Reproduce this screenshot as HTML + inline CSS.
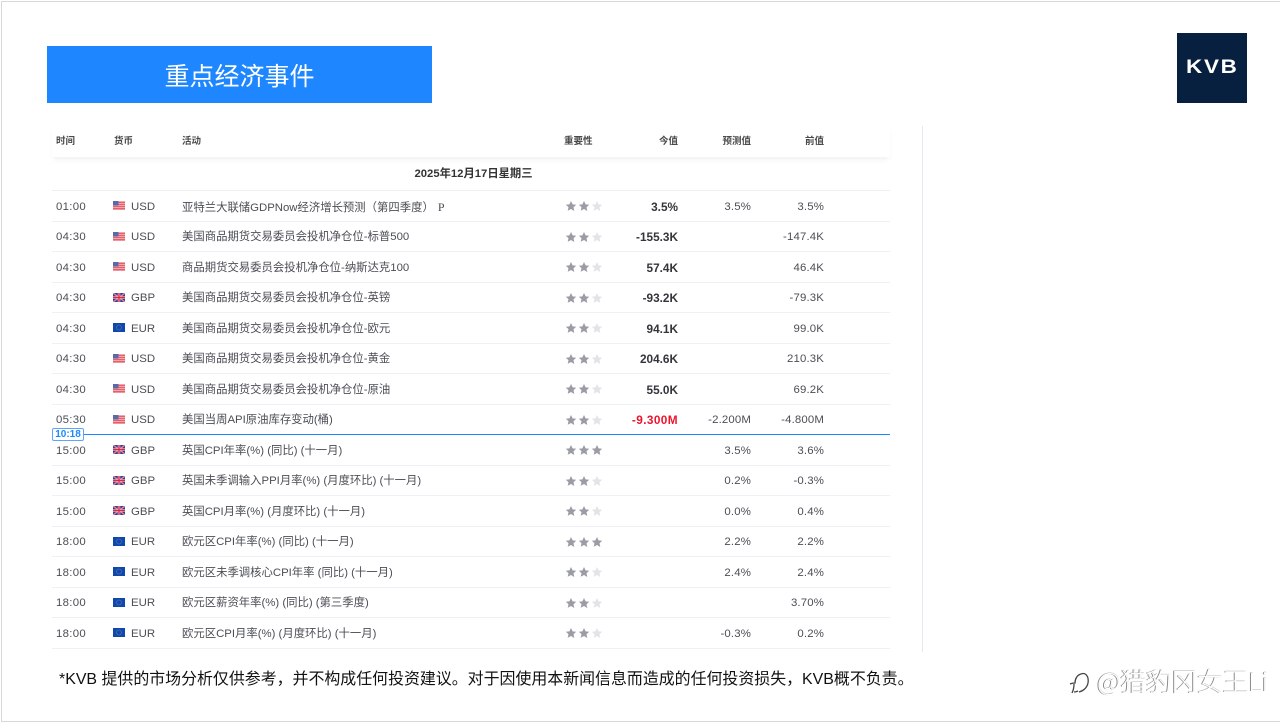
<!DOCTYPE html>
<html lang="zh"><head><meta charset="utf-8"><title>重点经济事件</title>
<style>
html,body{margin:0;padding:0;background:#fff}
body{width:1280px;height:723px;position:relative;overflow:hidden;font-family:"Liberation Sans","Noto Sans CJK SC",sans-serif;color:#3c3f46}
#w{position:absolute;left:0;top:0;width:1280px;height:723px;filter:blur(.35px);background:#fff}
.frame{position:absolute;left:1px;top:1px;width:1279px;height:721px;border:1px solid #d8d8d8;border-right:0;box-sizing:border-box}
.title{position:absolute;left:47px;top:46px;width:385px;height:57px;background:#1e87ff;color:#fff;font-size:25px;line-height:58px;text-align:center;font-family:"Noto Sans CJK SC",sans-serif;font-weight:400}
.logo{position:absolute;left:1177px;top:33px;width:70px;height:70px;background:#07203f;color:#fff;font-size:19px;font-weight:bold;line-height:69px;text-align:center;letter-spacing:1.5px}
.logo span{display:inline-block;transform:scaleX(1.18)}
.vline{position:absolute;left:922px;top:126px;width:1px;height:526px;background:#e4e7ec}
.hd{position:absolute;left:52px;top:126px;width:838px;height:31px;box-shadow:0 4px 6px -2px rgba(0,0,0,.07)}
.hd span{position:absolute;top:7.500px;font-size:9.500px;line-height:16px;font-weight:bold;color:#4a4a4a}
.date{position:absolute;left:52px;width:838px;top:165.500px;text-align:center;font-size:11.300px;line-height:16px;font-weight:bold;color:#333;text-indent:5px}
.r{position:absolute;left:52px;width:838px;height:30px;border-top:1px solid #edf0f5}
.r span{position:absolute;top:7.500px;line-height:16px;font-size:11.400px;white-space:nowrap;color:#4b4e55}
.t{left:4px;letter-spacing:.3px}
.c{left:79px}
.n{left:130px;font-size:11.370px!important}
.a,.f,.p{text-align:right}
.a{right:212px;font-weight:bold;font-size:11.800px!important;color:#33353b!important}
.f{right:139px;letter-spacing:.15px}
.p{right:66px;letter-spacing:.15px}
.s{left:513px;width:38px;height:10px;top:10px!important}
.fl{left:61px;top:10px!important;width:12px;height:9px}
svg{display:block}
.red{color:#f0122d!important;letter-spacing:.4px}
.now{position:absolute;left:52px;top:434px;width:838px;height:1px;background:#1e87ff}
.nowt{position:absolute;left:52px;top:428px;width:32px;height:13px;box-sizing:border-box;border:1px solid #5aa5ff;border-radius:2px;background:#fff;color:#1e87ff;font-size:10px;line-height:11px;text-align:center;font-weight:bold}
.foot{position:absolute;left:59px;top:670px;font-size:15.930px;line-height:20px;color:#111;white-space:nowrap}
.wm{position:absolute;left:1097px;top:666px;font-size:25.600px;line-height:30px;color:#fff;white-space:nowrap;font-family:"Noto Sans CJK SC",sans-serif;font-weight:300;text-shadow:-1px 0 0 #8a8a8a,0 -.5px 0 #bbb}
.wi{position:absolute;left:1067px;top:670px}
</style></head><body>
<svg width="0" height="0" style="position:absolute"><defs>
<symbol id="st" viewBox="0 0 38 10"><path fill="#9a9ca6" d="M6 0l1.600 3.400 3.600.4-2.700 2.500.8 3.700L6 8 2.700 9.800l.8-3.700L.8 3.800l3.600-.4zM19 0l1.600 3.400 3.600.4-2.700 2.500.8 3.700L19 8l-3.300 1.800.8-3.700-2.700-2.300 3.600-.4z"/><path fill="#e3e4e8" d="M32 0l1.600 3.400 3.600.4-2.700 2.500.8 3.700L32 8l-3.300 1.800.8-3.700-2.700-2.300 3.600-.4z"/></symbol>
<symbol id="s3" viewBox="0 0 38 10"><path fill="#9a9ca6" d="M6 0l1.600 3.400 3.600.4-2.700 2.500.8 3.700L6 8 2.700 9.800l.8-3.700L.8 3.800l3.600-.4zM19 0l1.600 3.400 3.600.4-2.700 2.500.8 3.700L19 8l-3.300 1.800.8-3.700-2.700-2.300 3.600-.4zM32 0l1.600 3.400 3.600.4-2.700 2.500.8 3.700L32 8l-3.300 1.800.8-3.700-2.700-2.300 3.600-.4z"/></symbol>
<symbol id="us" viewBox="0 0 12 9"><rect width="12" height="9" fill="#f4a6ac"/><path fill="#e0606c" d="M0 1h12v1H0zM0 3h12v1H0zM0 5h12v1H0zM0 7h12v1.200H0z"/><rect width="5.500" height="4.500" fill="#5a6aa8"/></symbol>
<symbol id="gb" viewBox="0 0 12 9"><rect width="12" height="9" rx="1.500" fill="#2f3f96"/><path stroke="#e88a9a" stroke-width="1.300" d="M0 0l12 9M12 0L0 9"/><path stroke="#f3dfe2" stroke-width="2.400" d="M6 0v9M0 4.500h12"/><path stroke="#dc2848" stroke-width="1.400" d="M6 0v9M0 4.500h12"/></symbol>
<symbol id="eu" viewBox="0 0 12 9"><rect width="12" height="9" fill="#0f47af"/><circle cx="6" cy="4.500" r="2.500" fill="none" stroke="#4a70a8" stroke-width=".8"/></symbol>
</defs></svg>
<div id="w">
<div class="frame"></div>
<div class="title">重点经济事件</div>
<div class="logo"><span>KVB</span></div>
<div class="vline"></div>
<div class="hd"><span style="left:4px">时间</span><span style="left:62px">货币</span><span style="left:130px">活动</span><span style="left:512px">重要性</span><span style="right:212px">今值</span><span style="right:139px">预测值</span><span style="right:66px">前值</span></div>
<div class="date">2025年12月17日星期三</div>

<div class="r" style="top:190px"><span class="t">01:00</span><span class="fl"><svg width="12" height="9"><use href="#us"/></svg></span><span class="c">USD</span><span class="n">亚特兰大联储GDPNow经济增长预测（第四季度）<span style="position:static;margin-left:1px;font-family:'Liberation Serif',serif;font-size:12px">&nbsp;P</span></span><span class="s"><svg width="38" height="10"><use href="#st"/></svg></span><span class="a">3.5%</span><span class="f">3.5%</span><span class="p">3.5%</span></div>
<div class="r" style="top:220.500px"><span class="t">04:30</span><span class="fl"><svg width="12" height="9"><use href="#us"/></svg></span><span class="c">USD</span><span class="n">美国商品期货交易委员会投机净仓位-标普500</span><span class="s"><svg width="38" height="10"><use href="#st"/></svg></span><span class="a">-155.3K</span><span class="p">-147.4K</span></div>
<div class="r" style="top:251px"><span class="t">04:30</span><span class="fl"><svg width="12" height="9"><use href="#us"/></svg></span><span class="c">USD</span><span class="n">商品期货交易委员会投机净仓位-纳斯达克100</span><span class="s"><svg width="38" height="10"><use href="#st"/></svg></span><span class="a">57.4K</span><span class="p">46.4K</span></div>
<div class="r" style="top:281.500px"><span class="t">04:30</span><span class="fl"><svg width="12" height="9"><use href="#gb"/></svg></span><span class="c">GBP</span><span class="n">美国商品期货交易委员会投机净仓位-英镑</span><span class="s"><svg width="38" height="10"><use href="#st"/></svg></span><span class="a">-93.2K</span><span class="p">-79.3K</span></div>
<div class="r" style="top:312px"><span class="t">04:30</span><span class="fl"><svg width="12" height="9"><use href="#eu"/></svg></span><span class="c">EUR</span><span class="n">美国商品期货交易委员会投机净仓位-欧元</span><span class="s"><svg width="38" height="10"><use href="#st"/></svg></span><span class="a">94.1K</span><span class="p">99.0K</span></div>
<div class="r" style="top:342.500px"><span class="t">04:30</span><span class="fl"><svg width="12" height="9"><use href="#us"/></svg></span><span class="c">USD</span><span class="n">美国商品期货交易委员会投机净仓位-黄金</span><span class="s"><svg width="38" height="10"><use href="#st"/></svg></span><span class="a">204.6K</span><span class="p">210.3K</span></div>
<div class="r" style="top:373px"><span class="t">04:30</span><span class="fl"><svg width="12" height="9"><use href="#us"/></svg></span><span class="c">USD</span><span class="n">美国商品期货交易委员会投机净仓位-原油</span><span class="s"><svg width="38" height="10"><use href="#st"/></svg></span><span class="a">55.0K</span><span class="p">69.2K</span></div>
<div class="r" style="top:403.500px"><span class="t">05:30</span><span class="fl"><svg width="12" height="9"><use href="#us"/></svg></span><span class="c">USD</span><span class="n">美国当周API原油库存变动(桶)</span><span class="s"><svg width="38" height="10"><use href="#st"/></svg></span><span class="a red">-9.300M</span><span class="f">-2.200M</span><span class="p">-4.800M</span></div>
<div class="r" style="top:434px"><span class="t">15:00</span><span class="fl"><svg width="12" height="9"><use href="#gb"/></svg></span><span class="c">GBP</span><span class="n">英国CPI年率(%) (同比) (十一月)</span><span class="s"><svg width="38" height="10"><use href="#s3"/></svg></span><span class="f">3.5%</span><span class="p">3.6%</span></div>
<div class="r" style="top:464.500px"><span class="t">15:00</span><span class="fl"><svg width="12" height="9"><use href="#gb"/></svg></span><span class="c">GBP</span><span class="n">英国未季调输入PPI月率(%) (月度环比) (十一月)</span><span class="s"><svg width="38" height="10"><use href="#st"/></svg></span><span class="f">0.2%</span><span class="p">-0.3%</span></div>
<div class="r" style="top:495px"><span class="t">15:00</span><span class="fl"><svg width="12" height="9"><use href="#gb"/></svg></span><span class="c">GBP</span><span class="n">英国CPI月率(%) (月度环比) (十一月)</span><span class="s"><svg width="38" height="10"><use href="#st"/></svg></span><span class="f">0.0%</span><span class="p">0.4%</span></div>
<div class="r" style="top:525.500px"><span class="t">18:00</span><span class="fl"><svg width="12" height="9"><use href="#eu"/></svg></span><span class="c">EUR</span><span class="n">欧元区CPI年率(%) (同比) (十一月)</span><span class="s"><svg width="38" height="10"><use href="#s3"/></svg></span><span class="f">2.2%</span><span class="p">2.2%</span></div>
<div class="r" style="top:556px"><span class="t">18:00</span><span class="fl"><svg width="12" height="9"><use href="#eu"/></svg></span><span class="c">EUR</span><span class="n">欧元区未季调核心CPI年率 (同比) (十一月)</span><span class="s"><svg width="38" height="10"><use href="#st"/></svg></span><span class="f">2.4%</span><span class="p">2.4%</span></div>
<div class="r" style="top:586.500px"><span class="t">18:00</span><span class="fl"><svg width="12" height="9"><use href="#eu"/></svg></span><span class="c">EUR</span><span class="n">欧元区薪资年率(%) (同比) (第三季度)</span><span class="s"><svg width="38" height="10"><use href="#st"/></svg></span><span class="p">3.70%</span></div>
<div class="r" style="top:617px;border-bottom:1px solid #edf0f5"><span class="t">18:00</span><span class="fl"><svg width="12" height="9"><use href="#eu"/></svg></span><span class="c">EUR</span><span class="n">欧元区CPI月率(%) (月度环比) (十一月)</span><span class="s"><svg width="38" height="10"><use href="#st"/></svg></span><span class="f">-0.3%</span><span class="p">0.2%</span></div>

<div class="now"></div>
<div class="nowt">10:18</div>
<div class="foot">*KVB 提供的市场分析仅供参考，并不构成任何投资建议。对于因使用本新闻信息而造成的任何投资损失，KVB概不负责。</div>
<svg class="wi" width="24" height="28" viewBox="0 0 24 28"><path fill="none" stroke="#444" stroke-width="1.300" d="M14 4c5-2 8 3 7 9-1 5-5 8-9 9M14 4c-4 1-6 5-6 9-2 0-4 .5-5 1M7 14c0 4-1 7-2 9M7 22c1 0 3-.5 4-1"/></svg>
<div class="wm">@猎豹冈女王Li</div>
</div>
</body></html>
